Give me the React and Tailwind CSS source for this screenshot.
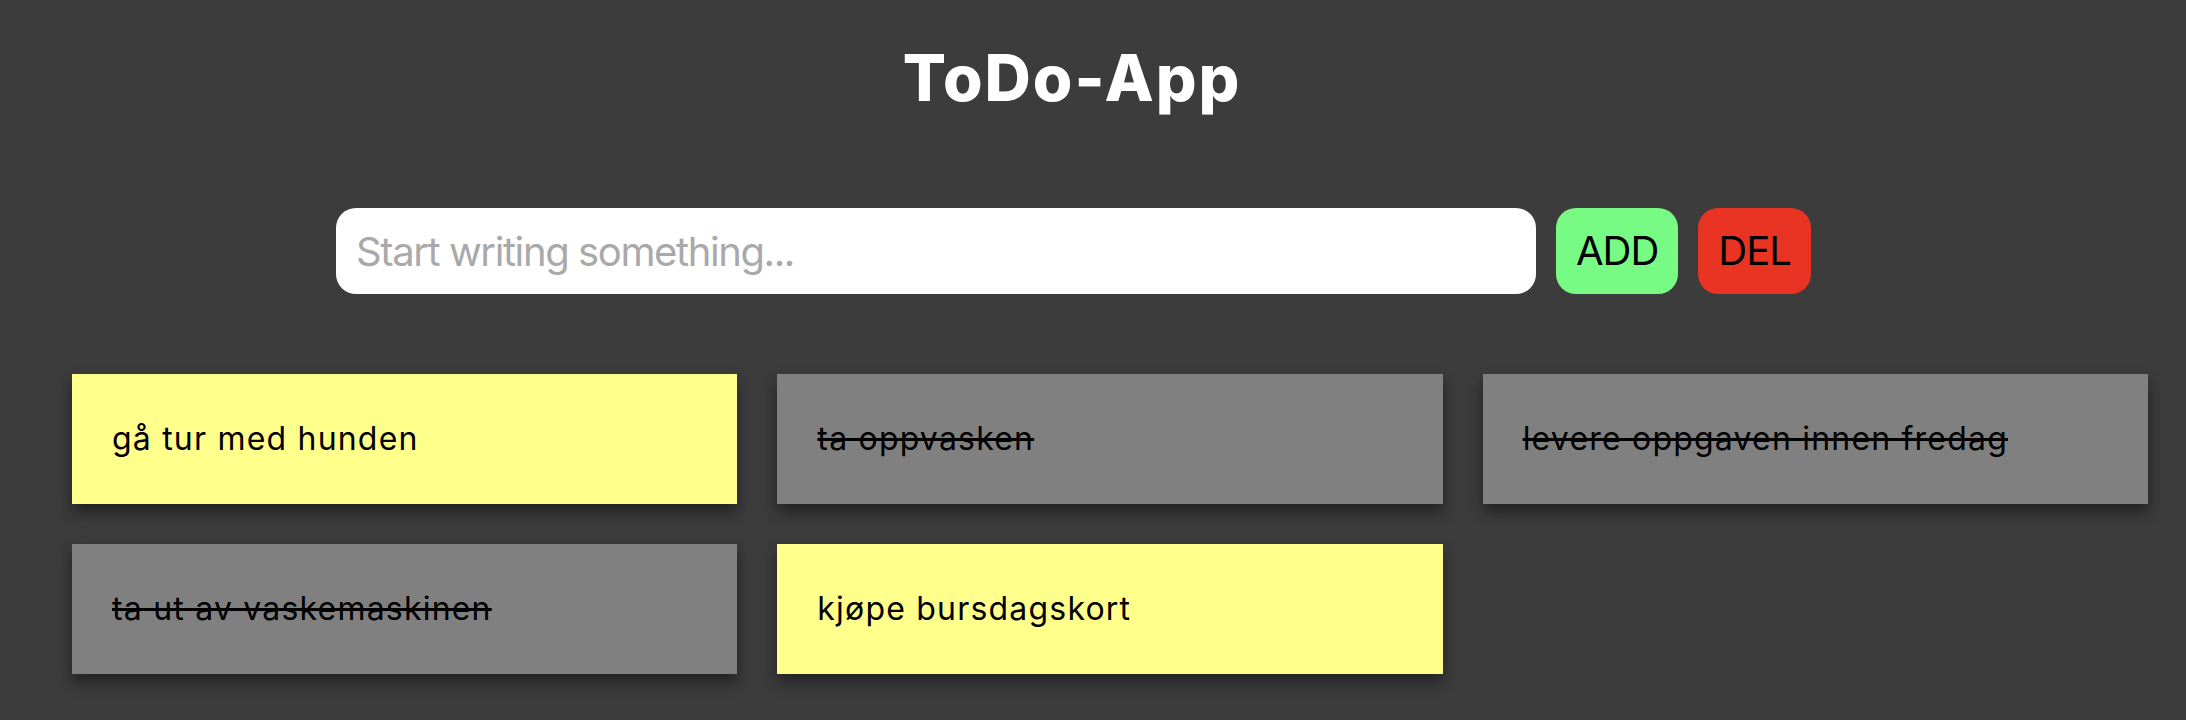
const todos = [
  { text: "gå tur med hunden", done: false },
  { text: "ta oppvasken", done: true },
  { text: "levere oppgaven innen fredag", done: true },
  { text: "ta ut av vaskemaskinen", done: true },
  { text: "kjøpe bursdagskort", done: false },
];

export default function App() {
  return (
    <div className="min-h-[720px] w-full bg-[#3c3c3c] font-['Inter',sans-serif]">
      <div className="w-[2144px] pt-[38px] text-center">
        <h1 className="text-[64px] leading-[80px] font-extrabold text-white tracking-[2px]">ToDo-App</h1>
      </div>
      <div className="flex items-center gap-[20px] pl-[336px] pt-[90px]">
        <input
          type="text"
          placeholder="Start writing something..."
          className="h-[86px] w-[1200px] rounded-[20px] bg-white px-[20px] text-[40px] tracking-[-1.4px] text-black outline-none placeholder:text-[#a9a9a9]"
        />
        <button className="h-[86px] rounded-[20px] bg-[#78fb84] px-[20px] text-[40px] tracking-[-1px] text-black">ADD</button>
        <button className="h-[86px] rounded-[20px] bg-[#e93323] px-[20px] text-[40px] tracking-[-1px] text-black">DEL</button>
      </div>
      <div className="grid grid-cols-3 gap-[40px] pl-[72px] pr-[38px] pt-[80px] pb-[46px]">
        {todos.map((t, i) => (
          <div
            key={i}
            className={
              "flex h-[130px] items-center px-[40px] shadow-[0_8px_14px_rgba(0,0,0,0.45)] " +
              (t.done ? "bg-[#808080]" : "bg-[#ffff8c]")
            }
          >
            <span className={"text-[32px] tracking-[1.2px] text-black " + (t.done ? "line-through" : "")}>{t.text}</span>
          </div>
        ))}
      </div>
    </div>
  );
}
